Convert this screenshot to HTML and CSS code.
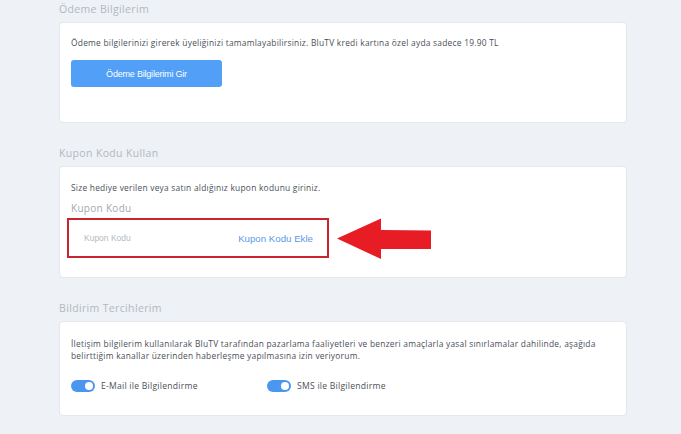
FILE: index.html
```html
<!DOCTYPE html>
<html lang="tr">
<head>
<meta charset="utf-8">
<title>Hesap</title>
<link rel="stylesheet" href="styles.css">
</head>
<body>
<main class="page">
  <h2 class="section-title first">Ödeme Bilgilerim</h2>
  <section class="card card-pay">
    <p class="text">Ödeme bilgilerinizi girerek üyeliğinizi tamamlayabilirsiniz. BluTV kredi kartına özel ayda sadece 19.90 TL</p>
    <button class="btn-primary" type="button">Ödeme Bilgilerimi Gir</button>
  </section>

  <h2 class="section-title">Kupon Kodu Kullan</h2>
  <section class="card card-coupon">
    <p class="text">Size hediye verilen veya satın aldığınız kupon kodunu giriniz.</p>
    <label class="field-label" for="kupon">Kupon Kodu</label>
    <div class="coupon-box">
      <input id="kupon" class="coupon-input" type="text" placeholder="Kupon Kodu">
      <span class="coupon-add">Kupon Kodu Ekle</span>
    </div>
    <svg class="arrow" width="96" height="42" viewBox="0 0 96 42" aria-hidden="true">
      <polygon points="0,20.5 44,0.5 44,12 94,12.5 94,31 44,31 44,41" fill="#e81c24"/>
    </svg>
  </section>

  <h2 class="section-title">Bildirim Tercihlerim</h2>
  <section class="card card-notify">
    <p class="text text-notify">İletişim bilgilerim kullanılarak BluTV tarafından pazarlama faaliyetleri ve benzeri amaçlarla yasal sınırlamalar dahilinde, aşağıda<br>belirttiğim kanallar üzerinden haberleşme yapılmasına izin veriyorum.</p>
    <div class="toggles">
      <div class="toggle-item">
        <span class="switch"><span class="knob"></span></span>
        <span class="toggle-label">E-Mail ile Bilgilendirme</span>
      </div>
      <div class="toggle-item">
        <span class="switch"><span class="knob"></span></span>
        <span class="toggle-label">SMS ile Bilgilendirme</span>
      </div>
    </div>
  </section>
</main>
</body>
</html>
```

FILE: styles.css
```css
* { box-sizing: border-box; }
html, body { margin: 0; padding: 0; }
body {
  background: #eef1f5;
  font-family: "Open Sans", "Noto Sans", sans-serif;
  color: #4a4f58;
  width: 681px;
  height: 434px;
  overflow: hidden;
}
.page {
  padding: 2px 0 0 59px;
  width: 627px;
}
.section-title {
  margin: 23px 0 5px;
  height: 15px;
  line-height: 15px;
  font-size: 10.5px;
  font-weight: 500;
  color: #b3b8c0;
  letter-spacing: 0.35px;
}
.section-title.first { margin-top: 0; }
.card {
  position: relative;
  background: #fff;
  border: 1px solid #e4e7eb;
  border-radius: 4px;
  padding: 0 11px;
}
.text {
  margin: 0;
  font-size: 8.4px;
  line-height: 12px;
  color: #4a4f58;
  letter-spacing: 0.25px;
}
.card-pay { height: 101px; padding-top: 14px; }
.btn-primary {
  display: block;
  margin-top: 11px;
  width: 151px;
  height: 27px;
  border: 0;
  border-radius: 3px;
  background: #519ff6;
  color: #fff;
  font-family: "Liberation Sans", Arial, sans-serif;
  font-size: 9px;
  letter-spacing: -0.2px;
  padding: 0;
}
.card-coupon { height: 112px; padding-top: 15px; }
.field-label {
  display: block;
  margin-top: 8px;
  font-size: 10px;
  line-height: 13px;
  color: #a3a8b0;
  letter-spacing: 0.3px;
}
.coupon-box {
  display: flex;
  align-items: center;
  margin: 3px 0 0 -4px;
  width: 262px;
  height: 40px;
  border: 2.5px solid #c9252f;
  padding: 0 14px 0 15px;
}
.coupon-input {
  flex: 1;
  border: 0;
  outline: 0;
  padding: 0;
  font-family: "Liberation Sans", Arial, sans-serif;
  font-size: 8.5px;
  color: #444;
  background: transparent;
  min-width: 0;
}
.coupon-input::placeholder { color: #b4b9bf; }
.coupon-add {
  font-family: "Liberation Sans", Arial, sans-serif;
  font-size: 9.7px;
  color: #5a9ae6;
  white-space: nowrap;
}
.arrow {
  position: absolute;
  left: 277px;
  top: 51px;
}
.card-notify { height: 95px; padding-top: 16px; }
.text-notify { line-height: 11.5px; }
.toggles {
  display: flex;
  margin-top: 19px;
}
.toggle-item {
  display: flex;
  align-items: center;
  width: 196px;
}
.switch {
  position: relative;
  display: inline-block;
  width: 24px;
  height: 12px;
  border-radius: 6px;
  background: #4b97f0;
  margin-right: 6px;
  flex: none;
}
.knob {
  position: absolute;
  right: 2px;
  top: 2px;
  width: 8px;
  height: 8px;
  border-radius: 50%;
  background: #fff;
}
.toggle-label {
  font-size: 8.6px;
  color: #4a4f58;
  letter-spacing: 0.25px;
}
```
